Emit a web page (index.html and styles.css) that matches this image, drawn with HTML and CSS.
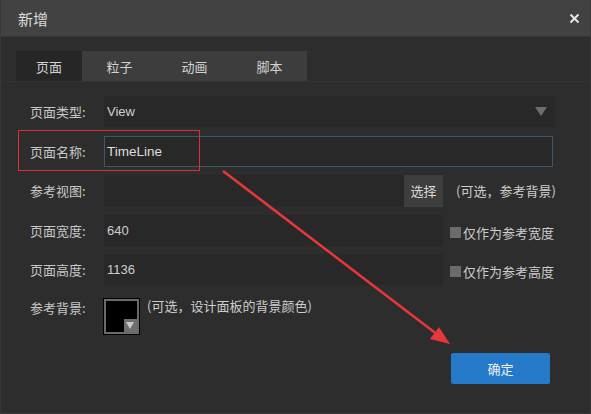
FILE: index.html
```html
<!DOCTYPE html>
<html>
<head>
<meta charset="utf-8">
<link rel="stylesheet" href="styles.css">
</head>
<body>
<div class="dialog">
  <div class="titlebar">
    <span class="title">新增</span>
    <svg class="close" width="11" height="11" viewBox="0 0 11 11"><path d="M1.5 1.5 L9.5 9.5 M9.5 1.5 L1.5 9.5" stroke="#e6e6e6" stroke-width="2"/></svg>
  </div>
  <div class="tabs">
    <div class="tab active">页面</div>
    <div class="tab">粒子</div>
    <div class="tab">动画</div>
    <div class="tab">脚本</div>
  </div>
  <div class="panel">
    <div class="row">
      <div class="label">页面类型:</div>
      <div class="field select"><span class="latin">View</span><span class="caret"></span></div>
    </div>
    <div class="row">
      <div class="label">页面名称:</div>
      <div class="field focus"><span class="latin name">TimeLine</span></div>
    </div>
    <div class="row">
      <div class="label">参考视图:</div>
      <div class="field short"></div>
      <div class="btn-choose">选择</div>
      <div class="hint">(可选，参考背景)</div>
    </div>
    <div class="row">
      <div class="label">页面宽度:</div>
      <div class="field mid"><span class="latin">640</span></div>
      <div class="check"><span class="box"></span>仅作为参考宽度</div>
    </div>
    <div class="row">
      <div class="label">页面高度:</div>
      <div class="field mid"><span class="latin">1136</span></div>
      <div class="check"><span class="box"></span>仅作为参考高度</div>
    </div>
    <div class="row bg-row">
      <div class="label">参考背景:</div>
      <div class="swatch"><span class="swatch-caret"></span></div>
      <div class="hint2">(可选，设计面板的背景颜色)</div>
    </div>
    <div class="footer">
      <div class="ok">确定</div>
    </div>
  </div>
  <div class="redbox"></div>
  <svg class="arrow" width="591" height="414" viewBox="0 0 591 414">
    <line x1="222" y1="171" x2="437" y2="335" stroke="#e8373b" stroke-width="2.5"/>
    <polygon points="449,344 429,339 438,327" fill="#e8373b"/>
  </svg>
</div>
</body>
</html>
```

FILE: styles.css
```css
html, body {
  margin: 0;
  padding: 0;
}
body {
  background: #2d2d2d;
  font-family: "Noto Sans CJK SC", "Microsoft YaHei", sans-serif;
  color: #cccccc;
  font-size: 13px;
}
.dialog {
  position: relative;
  width: 591px;
  height: 414px;
  background: #2d2d2d;
  overflow: hidden;
  box-sizing: border-box;
  border-left: 1px solid #383838;
  border-right: 1px solid #383838;
  border-bottom: 1px solid #383838;
}
.titlebar {
  height: 37px;
  margin: 0 -1px;
  background: #424242;
  border-bottom: 1px solid #363636;
  box-sizing: border-box;
  display: flex;
  align-items: center;
  justify-content: space-between;
  padding: 0 11px 0 18px;
}
.title {
  font-size: 15px;
  color: #dcdcdc;
}
.close {
  display: block;
}
.tabs {
  display: flex;
  margin-top: 14px;
  padding-left: 15px;
  height: 30px;
  border-bottom: 1px solid #333;
}
.tab {
  width: 75px;
  height: 30px;
  display: flex;
  align-items: center;
  justify-content: center;
  background: #3d3d3d;
  color: #d2d2d2;
}
.tab.active {
  width: 66px;
  background: #262626;
}
.panel {
  padding: 14px 0 0 29px;
  display: flex;
  flex-direction: column;
  gap: 8.5px;
}
.row {
  display: flex;
  align-items: center;
  height: 31px;
}
.label {
  width: 74px;
  flex: none;
  color: #c8c8c8;
}
.field {
  height: 31px;
  box-sizing: border-box;
  background: #282828;
  display: flex;
  align-items: center;
  padding-left: 3px;
  width: 451px;
}
.latin {
  font-family: "Liberation Sans", Arial, sans-serif;
  font-size: 13px;
  color: #cfcfcf;
}
.name {
  font-size: 13.5px;
  color: #dedede;
}
.select {
  justify-content: space-between;
  padding-right: 8px;
}
.caret {
  width: 0;
  height: 0;
  border-left: 6px solid transparent;
  border-right: 6px solid transparent;
  border-top: 9px solid #6e6e6e;
}
.focus {
  width: 449px;
  border: 1px solid #3a5866;
  padding-left: 2px;
}
.short {
  width: 300px;
}
.btn-choose {
  width: 39px;
  height: 32px;
  background: #3e3e3e;
  display: flex;
  align-items: center;
  justify-content: center;
  color: #d8d8d8;
}
.hint {
  margin-left: 13px;
  color: #cccccc;
}
.mid {
  width: 339px;
}
.check {
  display: flex;
  align-items: center;
  margin-left: 7px;
  margin-top: 4px;
  color: #cccccc;
}
.box {
  width: 11px;
  height: 11px;
  background: #6b6b6b;
  margin-right: 2px;
}
.bg-row {
  align-items: flex-start;
  height: 36px;
  margin-top: 5px;
}
.bg-row .label {
  margin-top: -1px;
}
.swatch {
  position: relative;
  width: 35px;
  height: 35px;
  box-sizing: border-box;
  background: #000;
  border: 2px solid #6a6a6a;
  outline: 1px solid #000;
}
.swatch-caret {
  position: absolute;
  right: 0;
  bottom: 0;
  width: 13px;
  height: 13px;
  background: #6e6e6e;
}
.swatch-caret::after {
  content: "";
  position: absolute;
  left: 2px;
  top: 3px;
  border-left: 4.5px solid transparent;
  border-right: 4.5px solid transparent;
  border-top: 7px solid #c9c9c9;
}
.hint2 {
  margin-left: 8px;
  margin-top: -3px;
  color: #cccccc;
}
.footer {
  display: flex;
  justify-content: flex-end;
  padding-right: 40px;
  margin-top: 10px;
}
.ok {
  width: 99px;
  height: 31px;
  background: #2479c8;
  border-radius: 2px;
  display: flex;
  align-items: center;
  justify-content: center;
  color: #f0f0f0;
}
.redbox {
  position: absolute;
  left: 17px;
  top: 130px;
  width: 180px;
  height: 39px;
  border: 1px solid #d9303a;
}
.arrow {
  position: absolute;
  left: 0;
  top: 0;
  pointer-events: none;
}
```
